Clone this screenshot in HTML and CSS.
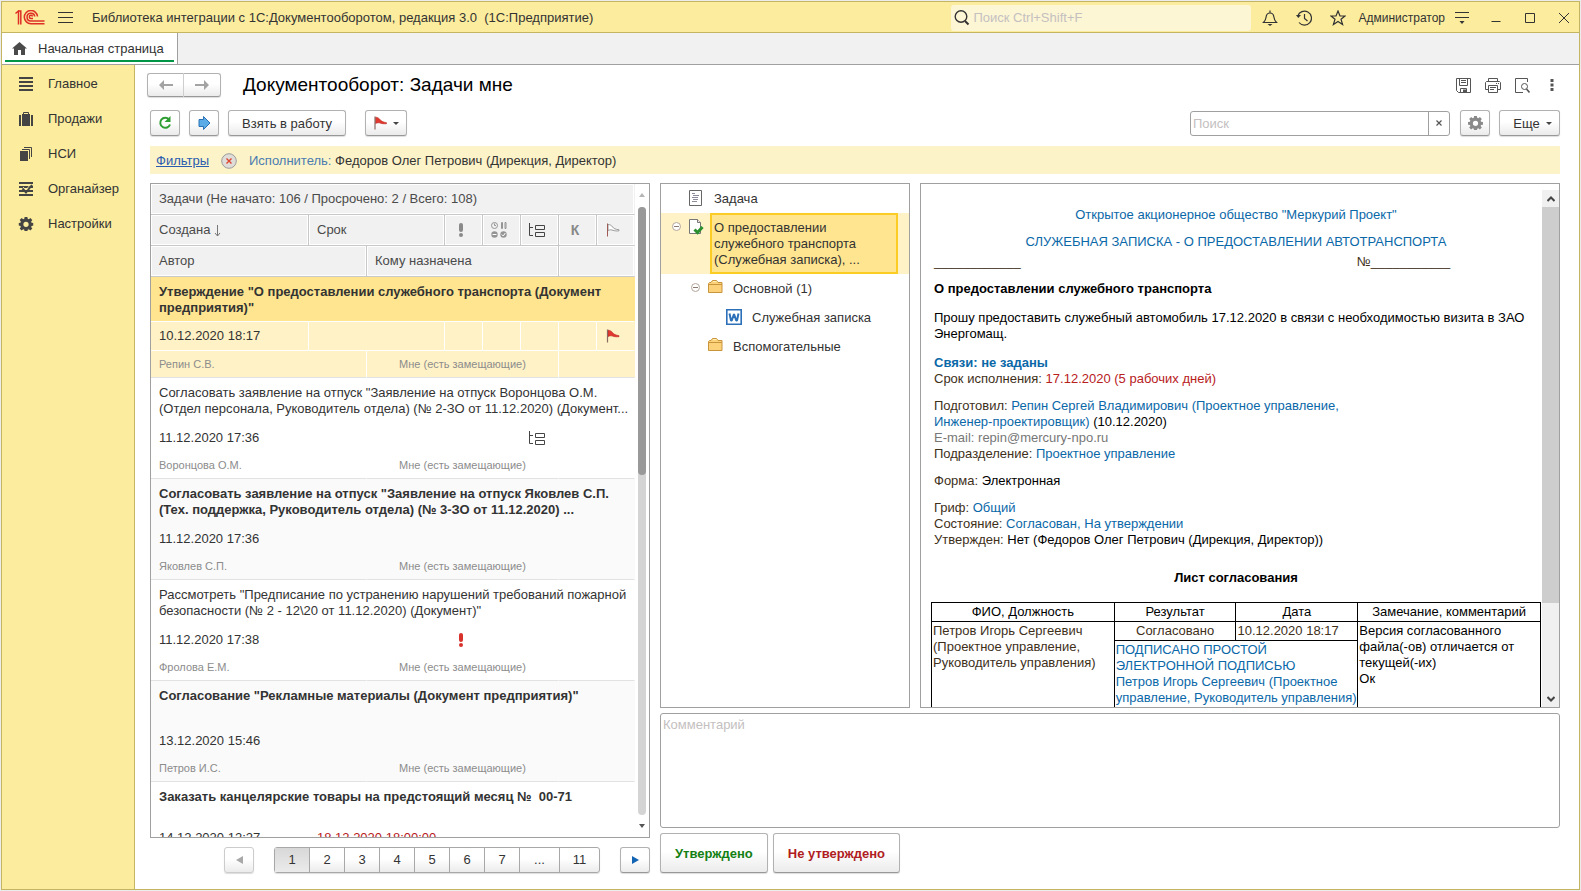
FILE: index.html
```html
<!DOCTYPE html>
<html lang="ru">
<head>
<meta charset="utf-8">
<meta name="viewport" content="width=device-width, initial-scale=1">
<title>Документооборот: Задачи мне</title>
<link rel="stylesheet" href="styles.css">
</head>
<body>
<svg class="sprite" aria-hidden="true">
  <symbol id="gear" viewBox="0 0 16 16">
    <path fill="currentColor" fill-rule="evenodd" d="M6.500 1h3l.3 2 1.200.5 1.600-1.300 2.100 2.100L13.400 6l.5 1.200 2 .2v2.800l-2 .3-.5 1.200 1.300 1.600-2.100 2.100-1.600-1.300-1.200.5-.3 2h-3l-.3-2-1.200-.5-1.600 1.300-2.100-2.100 1.300-1.600-.5-1.200-2-.3V7.400l2-.2.500-1.200-1.300-1.700 2.100-2.100L5 3.500 6.200 3zM8 6a2.800 2.800 0 1 0 0 5.600A2.800 2.800 0 0 0 8 6z"/>
  </symbol>
  <symbol id="tree" viewBox="0 0 17 16">
    <path fill="none" stroke="#444" d="M1.500 1v12.500H5M1.500 5.500H5M7.500 3.500h9v4h-9zM7.500 10.500h9v4h-9z"/>
  </symbol>
  <symbol id="flag-red" viewBox="0 0 14 14">
    <path fill="#e2382f" stroke="#b8241d" stroke-width=".6" d="M2 1.200c2 0 3.500 1 4.500 2.300 1.200 2 3.500 2.600 6.500 3.200v1c-2 .3-4.500 0-6-.5S4 6.500 2 7.500z"/>
    <path stroke="#8a6a64" stroke-width="1.200" d="M1.500.5v13"/>
  </symbol>
  <symbol id="folder" viewBox="0 0 15 13">
    <path fill="#fbd27a" stroke="#c8943c" d="M.5 3.500l1-1h1.500l1.500-2h4l1.500 2h4v10H.5z"/>
    <path fill="none" stroke="#c8943c" d="M1 4.500h13"/>
    <path stroke="#fff0b8" d="M5 1.500h3.500"/>
  </symbol>
  <symbol id="minus" viewBox="0 0 9 9">
    <circle cx="4.500" cy="4.500" r="4" fill="#fff" stroke="#b5a69a"/><path stroke="#8c7a70" d="M2 4.500h5"/>
  </symbol>
  <symbol id="bang" viewBox="0 0 6 14">
    <rect x="1" y="0" width="4" height="9" rx="2" fill="currentColor"/><circle cx="3" cy="12" r="2" fill="currentColor"/>
  </symbol>
</svg>

<div class="window">
  <header class="titlebar">
    <svg class="logo" viewBox="0 0 30 15" aria-label="1С"><g fill="none" stroke="#df2f27" stroke-width="1.500"><path d="M.5 3.500L3.500 1v13.500M3 1h2.800v13.500"/><path d="M22.500 6.500A6.600 6.600 0 1 0 16 13.700h13.500"/><path d="M19.800 6.500A3.900 3.900 0 1 0 16 11h13.500"/><path d="M17.500 6.500a1.600 1.600 0 1 0-1.500 2h2"/></g></svg>
    <button class="bare" aria-label="Меню"><svg width="15" height="13" viewBox="0 0 15 13"><path stroke="#333" d="M0 1.500h15M0 6.500h15M0 11.500h15"/></svg></button>
    <span class="app-name">Библиотека интеграции с 1С:Документооборотом, редакция 3.0 &nbsp;(1С:Предприятие)</span>
    <label class="global-search">
      <svg width="16" height="17" viewBox="0 0 16 17" fill="none" stroke="#333"><circle cx="7" cy="7.500" r="5.800" stroke-width="1.400"/><path stroke-width="2" d="M11 12l3.500 3.500"/></svg>
      <input type="text" placeholder="Поиск Ctrl+Shift+F" aria-label="Глобальный поиск">
    </label>
    <nav class="title-tools">
      <button class="bare" aria-label="Уведомления"><svg width="16" height="16" viewBox="0 0 16 16"><path fill="none" stroke="#333" stroke-width="1.200" d="M8 .5V3M1.500 12.500c2-2 2.300-3 2.600-5.500C4.400 4.500 6 3 8 3s3.600 1.500 3.900 4c.3 2.500.6 3.500 2.600 5.500z"/><path fill="#333" d="M5.500 14h5L8 16z"/></svg></button>
      <button class="bare" aria-label="История"><svg width="16" height="16" viewBox="0 0 16 16"><path fill="none" stroke="#333" stroke-width="1.200" d="M1.800 6A7 7 0 1 1 3 12.500M8.500 4v4.500l3 2.500"/><path fill="#333" d="M0 5h5L2.300 8z"/></svg></button>
      <button class="bare" aria-label="Избранное"><svg width="16" height="16" viewBox="0 0 16 16"><path fill="none" stroke="#333" stroke-width="1.200" d="M8 1l2 5h5l-4 3.300 1.600 5.200L8 11.500l-4.600 3L5 9.300 1 6h5z"/></svg></button>
      <a class="user" href="#">Администратор</a>
      <button class="bare" aria-label="Сервис"><svg width="14" height="14" viewBox="0 0 14 14"><path stroke="#333" d="M0 1.500h14M0 6.500h14"/><path fill="#333" d="M4.500 10h5L7 13z"/></svg></button>
    </nav>
    <div class="win-buttons">
      <button class="bare" aria-label="Свернуть"><svg width="10" height="10" viewBox="0 0 10 10"><path stroke="#333" d="M.5 8.500h9"/></svg></button>
      <button class="bare" aria-label="Развернуть"><svg width="10" height="10" viewBox="0 0 10 10"><path fill="none" stroke="#333" d="M.5.500h9v9h-9z"/></svg></button>
      <button class="bare" aria-label="Закрыть"><svg width="10" height="10" viewBox="0 0 10 10"><path stroke="#333" d="M0 0l10 10M10 0L0 10"/></svg></button>
    </div>
  </header>

  <div class="tabs">
    <a class="tab" href="#"><svg width="15" height="13" viewBox="0 0 15 13"><path fill="#4a4a4a" d="M7.500 0L15 6.500h-2V13H9V8H6v5H2V6.500H0z"/></svg><span>Начальная страница</span></a>
  </div>

  <div class="body">
    <nav class="sidebar">
      <a href="#"><svg width="14" height="15" viewBox="0 0 14 15"><path stroke="#444" stroke-width="2" d="M0 2h14M0 6h14M0 10h14M0 14h14"/></svg>Главное</a>
      <a href="#"><svg width="14" height="14" viewBox="0 0 14 14"><path fill="#444" d="M3 2h8v12H3zM0 3h2v11H0zM12 3h2v11h-2z"/><path fill="none" stroke="#444" d="M4.500 2V.5h5V2"/></svg>Продажи</a>
      <a href="#"><svg width="14" height="14" viewBox="0 0 14 14"><path fill="#444" d="M1 4h8v10H1z"/><path fill="none" stroke="#444" d="M3 2.500h7.500V12M5 .5h7.500V10"/></svg>НСИ</a>
      <a href="#"><svg width="14" height="14" viewBox="0 0 14 14"><path stroke="#444" stroke-width="2" d="M0 1h14M0 5h14M0 9h14M0 13h14"/><path fill="none" stroke="#fbec9e" d="M4 5l3 3 4.500-5.500"/><path fill="none" stroke="#444" stroke-width="2" d="M3.500 6.500l3.500 4 6-7.500"/></svg>Органайзер</a>
      <a href="#"><svg class="dark" width="16" height="16" viewBox="0 0 16 17"><use href="#gear" width="16" height="16"/></svg>Настройки</a>
    </nav>

    <main class="main">
      <div class="heading">
        <div class="history">
          <button class="btn" aria-label="Назад"><svg width="14" height="10" viewBox="0 0 14 10"><path fill="#a3a3a3" d="M0 5l5-5v4h9v2H5v4z"/></svg></button><button class="btn" aria-label="Вперед"><svg width="14" height="10" viewBox="0 0 14 10"><path fill="#a3a3a3" d="M14 5L9 0v4H0v2h9v4z"/></svg></button>
        </div>
        <h1>Документооборот: Задачи мне</h1>
        <div class="doc-tools">
          <button class="bare" aria-label="Сохранить"><svg width="15" height="15" viewBox="0 0 15 15"><path fill="none" stroke="#555" d="M.5.500h14v14h-12l-2-2zM3.500.5v7h8v-7M5 2.500h5M5 4.500h5M4.500 14.500v-4h6v4"/><path fill="#555" d="M7 11.500h3v3H7z"/></svg></button>
          <button class="bare" aria-label="Печать"><svg width="16" height="15" viewBox="0 0 16 15"><path fill="none" stroke="#555" d="M3.500 4V.5h9V4M3 11.500H.5v-7l1-1h13l1 1v7H13M3.500 7.500h9v7h-9zM5 9.500h6M5 11.500h4M11 5.500h1M13 5.500h1"/></svg></button>
          <button class="bare" aria-label="Просмотр"><svg width="15" height="15" viewBox="0 0 15 15"><path fill="none" stroke="#555" d="M12.500 4V.5H.5v14H8"/><circle cx="9.500" cy="8.500" r="3" fill="none" stroke="#555"/><path stroke="#555" stroke-width="1.600" d="M11.500 11l3 3.500"/></svg></button>
          <button class="bare" aria-label="Ещё действия"><svg width="4" height="12" viewBox="0 0 4 12"><path fill="#555" d="M.5 0h3v3h-3zM.5 4.500h3v3h-3zM.5 9h3v3h-3z"/></svg></button>
        </div>
      </div>

      <div class="toolbar">
        <button class="btn icon" aria-label="Обновить"><svg width="14" height="14" viewBox="0 0 14 14"><path fill="none" stroke="#2f9e33" stroke-width="2" d="M11 3.500a5 5 0 1 0 1 5"/><path fill="#2f9e33" d="M12.500 0v6h-6z"/></svg></button>
        <button class="btn icon" aria-label="Перейти"><svg width="13" height="14" viewBox="0 0 13 14"><path fill="#5aabe6" stroke="#2b72b4" d="M1 3.500h4.500v-3L12 7l-6.500 6.500v-3H1z"/></svg></button>
        <button class="btn take">Взять в работу</button>
        <button class="btn flag" aria-label="Флаг"><svg width="15" height="14"><use href="#flag-red"/></svg><span class="caret"></span></button>
        <span class="spacer"></span>
        <div class="search">
          <input type="text" placeholder="Поиск" aria-label="Поиск">
          <button aria-label="Очистить"><svg width="6" height="6" viewBox="0 0 6 6"><path stroke="#555" stroke-width="1.200" d="M.5.5l5 5M5.500.5l-5 5"/></svg></button>
        </div>
        <button class="btn icon" aria-label="Настройка"><svg class="gray" width="17" height="17" viewBox="0 0 16 18"><use href="#gear" width="16" height="16"/></svg></button>
        <button class="btn more">Еще <span class="caret"></span></button>
      </div>

      <div class="filters">
        <a href="#">Фильтры</a>
        <button class="bare" aria-label="Сбросить"><svg width="16" height="16" viewBox="0 0 16 16"><circle cx="8" cy="8" r="7.300" fill="#e0dcd8" stroke="#9c9c9c"/><path stroke="#e0452f" stroke-width="1.400" d="M5.500 5.500l5 5M10.500 5.500l-5 5"/></svg></button>
        <span><span class="filter-name">Исполнитель:</span> Федоров Олег Петрович (Дирекция, Директор)</span>
      </div>

      <div class="workspace">
        <section class="left">
          <div class="list panel">
            <div class="list-view">
              <table class="tasks">
                <colgroup><col class="c-created"><col class="c-author"><col class="c-term"><col class="c-ico"><col class="c-ico"><col class="c-ico"><col class="c-ico"><col class="c-ico"></colgroup>
                <thead>
                  <tr><th colspan="8">Задачи (Не начато: 106 / Просрочено: 2 / Всего: 108)</th></tr>
                  <tr>
                    <th>Создана <svg width="7" height="12" viewBox="0 0 7 12"><path fill="none" stroke="#777" d="M3.500 0v11M1 8l2.500 3L6 8"/></svg></th>
                    <th colspan="2">Срок</th>
                    <th class="ico"><svg class="gray" width="6" height="14" aria-label="Важность"><use href="#bang"/></svg></th>
                    <th class="ico"><svg width="16" height="16" viewBox="0 0 16 16" aria-label="Состояние"><g fill="none" stroke="#949494"><circle cx="3.500" cy="3.500" r="3"/><path d="M3.500 1.500v2H5M10.500.5h1v6h-1zM14 .5h1v6h-1z"/></g><circle cx="3.500" cy="12.500" r="3.200" fill="#949494"/><circle cx="12.500" cy="12.500" r="3.200" fill="#949494"/><path fill="none" stroke="#fff" d="M1.500 12.500h4M10.800 12.500l1.500 1.500 2-3"/></svg></th>
                    <th class="ico"><svg width="17" height="16" aria-label="Подзадачи"><use href="#tree"/></svg></th>
                    <th class="ico letter">К</th>
                    <th class="ico"><svg width="14" height="14" viewBox="0 0 14 14" aria-label="Флаг"><path fill="#fff" stroke="#999" d="M2 1.500c2 0 3.500 1 4.500 2.300 1.200 2 3 2.400 6.500 3v1c-2 .4-4.500 0-6-.5S4 6.500 2 7.500z"/><path stroke="#a05a55" d="M1.500.5v13"/></svg></th>
                  </tr>
                  <tr><th colspan="2">Автор</th><th colspan="4">Кому назначена</th><th colspan="2"></th></tr>
                </thead>
                <tbody class="selected">
                  <tr class="name unread"><td colspan="8"><div>Утверждение "О предоставлении служебного транспорта (Документ<br>предприятия)"</div></td></tr>
                  <tr class="when"><td>10.12.2020 18:17</td><td colspan="2"></td><td></td><td></td><td></td><td></td><td class="ico"><svg width="14" height="14" aria-label="Флаг"><use href="#flag-red"/></svg></td></tr>
                  <tr class="who"><td colspan="2">Репин С.В.</td><td colspan="4">Мне (есть замещающие)</td><td colspan="2"></td></tr>
                </tbody>
                <tbody>
                  <tr class="name"><td colspan="8"><div>Согласовать заявление на отпуск "Заявление на отпуск Воронцова О.М.<br>(Отдел персонала, Руководитель отдела) (№ 2-ЗО от 11.12.2020) (Документ...</div></td></tr>
                  <tr class="when"><td>11.12.2020 17:36</td><td colspan="2"></td><td></td><td></td><td class="ico"><svg width="17" height="16" aria-label="Есть подзадачи"><use href="#tree"/></svg></td><td></td><td></td></tr>
                  <tr class="who"><td colspan="2">Воронцова О.М.</td><td colspan="4">Мне (есть замещающие)</td><td colspan="2"></td></tr>
                </tbody>
                <tbody class="even">
                  <tr class="name unread"><td colspan="8"><div>Согласовать заявление на отпуск "Заявление на отпуск Яковлев С.П.<br>(Тех. поддержка, Руководитель отдела) (№ 3-ЗО от 11.12.2020) ...</div></td></tr>
                  <tr class="when"><td>11.12.2020 17:36</td><td colspan="2"></td><td></td><td></td><td></td><td></td><td></td></tr>
                  <tr class="who"><td colspan="2">Яковлев С.П.</td><td colspan="4">Мне (есть замещающие)</td><td colspan="2"></td></tr>
                </tbody>
                <tbody>
                  <tr class="name"><td colspan="8"><div>Рассмотреть "Предписание по устранению нарушений требований пожарной<br>безопасности (№ 2 - 12\20 от 11.12.2020) (Документ)"</div></td></tr>
                  <tr class="when"><td>11.12.2020 17:38</td><td colspan="2"></td><td class="ico"><svg class="red" width="6" height="14" aria-label="Важная"><use href="#bang"/></svg></td><td></td><td></td><td></td><td></td></tr>
                  <tr class="who"><td colspan="2">Фролова Е.М.</td><td colspan="4">Мне (есть замещающие)</td><td colspan="2"></td></tr>
                </tbody>
                <tbody class="even">
                  <tr class="name unread"><td colspan="8"><div>Согласование "Рекламные материалы (Документ предприятия)"</div></td></tr>
                  <tr class="when"><td>13.12.2020 15:46</td><td colspan="2"></td><td></td><td></td><td></td><td></td><td></td></tr>
                  <tr class="who"><td colspan="2">Петров И.С.</td><td colspan="4">Мне (есть замещающие)</td><td colspan="2"></td></tr>
                </tbody>
                <tbody>
                  <tr class="name unread"><td colspan="8"><div>Заказать канцелярские товары на предстоящий месяц № &nbsp;00-71</div></td></tr>
                  <tr class="when last"><td>14.12.2020 12:27</td><td class="overdue" colspan="2">18.12.2020 18:00:00</td><td></td><td></td><td></td><td></td><td></td></tr>
                </tbody>
              </table>
            </div>
            <div class="scroll thin" aria-hidden="true">
              <svg width="6" height="4" viewBox="0 0 6 4"><path fill="#b5b5b5" d="M3 0l3 4H0z"/></svg>
              <div class="track"><div class="thumb"></div></div>
              <svg width="6" height="4" viewBox="0 0 6 4"><path fill="#555" d="M0 0h6L3 4z"/></svg>
            </div>
          </div>
          <nav class="pager">
            <button class="btn step off" aria-label="Предыдущая"><svg width="7" height="8" viewBox="0 0 7 8"><path fill="#a8a8a8" d="M7 0v8L0 4z"/></svg></button>
            <div class="pages">
              <button class="current">1</button><button>2</button><button>3</button><button>4</button><button>5</button><button>6</button><button>7</button><button class="wide">...</button><button class="wide">11</button>
            </div>
            <button class="btn step" aria-label="Следующая"><svg width="7" height="8" viewBox="0 0 7 8"><path fill="#1464b4" d="M0 0v8l7-4z"/></svg></button>
          </nav>
        </section>

        <section class="right">
          <div class="panels">
            <ul class="tree panel">
              <li><span class="toggle"></span><svg width="15" height="16" viewBox="0 0 15 16"><path fill="#fff" stroke="#666" d="M.5.5h12v15H.5z"/><path stroke="#8c8c9c" d="M3 3.500h3M4 5.500h6M3 7.500h6M4 9.500h5M3 11.500h5"/></svg><span class="node">Задача</span></li>
              <li class="active"><svg class="toggle" height="9"><use href="#minus"/></svg><svg width="15" height="16" viewBox="0 0 15 16"><path fill="#fff" stroke="#777" d="M.5.500h8l3 3v11H.5z"/><path fill="#eee" stroke="#777" d="M8.500.5v3h3"/><path fill="none" stroke="#2a8f2f" stroke-width="3" d="M5.500 10.500l3 3 5-5.500"/></svg><span class="node">О предоставлении служебного транспорта (Служебная записка), ...</span></li>
              <li class="l1"><svg class="toggle" height="9"><use href="#minus"/></svg><svg width="15" height="13"><use href="#folder"/></svg><span class="node">Основной (1)</span></li>
              <li class="l2"><span class="toggle"></span><svg width="16" height="16" viewBox="0 0 16 16"><path fill="#fff" stroke="#2b70b8" stroke-width="1.600" d="M.8.8h14.400v14.400H.8z"/><path fill="none" stroke="#2b70b8" stroke-width="2" stroke-linejoin="bevel" d="M3.500 4.500l1.500 7h.8L8 5l2.200 6.500h.8l1.500-7"/></svg><span class="node">Служебная записка</span></li>
              <li class="l1"><span class="toggle"></span><svg width="15" height="13"><use href="#folder"/></svg><span class="node">Вспомогательные</span></li>
            </ul>

            <div class="preview panel">
              <article class="doc">
                <p class="center link">Открытое акционерное общество "Меркурий Проект"</p>
                <p class="center link">СЛУЖЕБНАЯ ЗАПИСКА - О ПРЕДОСТАВЛЕНИИ АВТОТРАНСПОРТА</p>
                <p class="number"><span>____________</span><span>№___________</span></p>
                <p class="strong">О предоставлении служебного транспорта</p>
                <p class="text">Прошу предоставить служебный автомобиль 17.12.2020 в связи с необходимостью визита в ЗАО Энергомащ.</p>
                <p><b class="link">Связи: не заданы</b><br>Срок исполнения: <span class="overdue">17.12.2020 (5 рабочих дней)</span></p>
                <p>Подготовил: <span class="link">Репин Сергей Владимирович (Проектное управление,<br>Инженер-проектировщик)</span> <span class="value">(10.12.2020)</span><br><span class="muted">E-mail: repin@mercury-npo.ru</span><br>Подразделение: <span class="link">Проектное управление</span></p>
                <p>Форма: <span class="value">Электронная</span></p>
                <p>Гриф: <span class="link">Общий</span><br>Состояние: <span class="link">Согласован, На утверждении</span><br>Утвержден: <span class="value">Нет (Федоров Олег Петрович (Дирекция, Директор))</span></p>
                <h2>Лист согласования</h2>
                <table class="approval">
                  <tr><th>ФИО, Должность</th><th>Результат</th><th>Дата</th><th>Замечание, комментарий</th></tr>
                  <tr><td rowspan="2">Петров Игорь Сергеевич<br>(Проектное управление,<br>Руководитель управления)</td><td class="center">Согласовано</td><td>10.12.2020 18:17</td><td class="value" rowspan="2">Версия согласованного<br>файла(-ов) отличается от<br>текущей(-их)<br>Ок</td></tr>
                  <tr><td class="link sign" colspan="2">ПОДПИСАНО ПРОСТОЙ<br>ЭЛЕКТРОННОЙ ПОДПИСЬЮ<br>Петров Игорь Сергеевич (Проектное<br>управление, Руководитель управления)</td></tr>
                </table>
              </article>
              <div class="scroll classic" aria-hidden="true">
                <span class="cap"><svg width="8" height="6" viewBox="0 0 8 6"><path fill="none" stroke="#444" stroke-width="2" d="M.5 5L4 1.500 7.500 5"/></svg></span>
                <div class="track"><div class="thumb"></div></div>
                <span class="cap"><svg width="8" height="6" viewBox="0 0 8 6"><path fill="none" stroke="#444" stroke-width="2" d="M.5 1L4 4.500 7.500 1"/></svg></span>
              </div>
            </div>
          </div>
          <textarea class="comment" placeholder="Комментарий" aria-label="Комментарий"></textarea>
          <div class="decisions">
            <button class="btn yes">Утверждено</button>
            <button class="btn no">Не утверждено</button>
          </div>
        </section>
      </div>
    </main>
  </div>
</div>
</body>
</html>
```

FILE: styles.css
```css
:root {
  --yellow: #fbec9e;
  --gold: #c4b562;
  --pale: #fcf3c8;
  --line: #a0a0a0;
  --text: #333;
  --link: #0a68a8;
}

* { box-sizing: border-box; }

body {
  margin: 0;
  padding: 1px;
  background: #ececec;
  color: var(--text);
  font: 13px/16px "Liberation Sans", Arial, sans-serif;
}

button, input, textarea { font: inherit; color: inherit; }
button { padding: 0; }
a { color: inherit; text-decoration: none; }
p, h1, h2, ul { margin: 0; padding: 0; }
svg { display: block; flex: none; }
.sprite { display: none; }

.window {
  display: flex;
  flex-direction: column;
  height: calc(100vh - 2px);
  border: 1px solid var(--gold);
  background: #fff;
}

.bare {
  display: flex;
  align-items: center;
  justify-content: center;
  border: 0;
  background: none;
}

/* Title bar */
.titlebar {
  display: flex;
  align-items: center;
  height: 31px;
  flex: none;
  padding: 1px 10px 0 13px;
  border-bottom: 1px solid var(--gold);
  background: var(--yellow);
}
.logo { width: 30px; height: 15px; margin-right: 13px; }
.app-name { margin-left: 19px; flex: 1; white-space: nowrap; }
.global-search {
  display: flex;
  align-items: center;
  gap: 3px;
  width: 300px;
  height: 26px;
  padding-left: 3px;
  border-radius: 3px;
  background: #fdf6d5;
}
.global-search input { flex: 1; min-width: 0; border: 0; padding: 0; background: none; outline: 0; }
::placeholder { color: #c4c0c0; opacity: 1; }
.title-tools { display: flex; align-items: center; gap: 18px; margin-left: 11px; }
.user { font-size: 12px; margin: 0 -8px 0 -6px; }
.win-buttons { display: flex; gap: 24px; margin-left: 22px; }

/* Tabs */
.tabs {
  display: flex;
  height: 32px;
  flex: none;
  border-bottom: 1px solid var(--line);
  background: #f1f1f1;
}
.tab {
  position: relative;
  display: flex;
  align-items: center;
  gap: 11px;
  padding: 0 13px 0 10px;
  border-right: 1px solid var(--line);
  background: #fff;
}
.tab::after {
  content: "";
  position: absolute;
  left: 3px;
  right: 3px;
  bottom: 2px;
  height: 2px;
  background: #009646;
}

.body { display: flex; flex: 1; min-height: 0; }

/* Sections */
.sidebar {
  width: 133px;
  flex: none;
  padding-top: 1px;
  border-right: 1px solid var(--gold);
  background: var(--yellow);
}
.sidebar a {
  display: grid;
  grid-template-columns: 16px 1fr;
  gap: 14px;
  align-items: center;
  justify-items: start;
  height: 35px;
  padding-left: 16px;
}
.sidebar svg { justify-self: center; }
.dark { color: #444; }
.gray { color: #8a8a8a; }
.red { color: #d8322c; }

.main {
  display: flex;
  flex-direction: column;
  flex: 1;
  min-width: 0;
  padding: 8px 19px 16px 15px;
}

/* Buttons */
.btn {
  display: flex;
  align-items: center;
  justify-content: center;
  height: 26px;
  border: 1px solid #b2b2b2;
  border-bottom-color: #989898;
  border-radius: 3px;
  background: linear-gradient(#fff 45%, #ebebeb);
  box-shadow: 0 1px 1px #ddd;
}
.btn.icon { width: 30px; }
.caret { border: 3px solid transparent; border-top-color: #444; border-bottom: 0; }

.heading { display: flex; align-items: center; height: 24px; }
.history { display: flex; margin-left: -3px; }
.history .btn { width: 37px; height: 24px; }
.history .btn:first-child { border-radius: 3px 0 0 3px; border-right-color: #ccc; }
.history .btn:last-child { border-radius: 0 3px 3px 0; border-left: 0; }
h1 { margin-left: 22px; flex: 1; font-size: 19px; font-weight: 400; line-height: 24px; color: #000; }
.doc-tools { display: flex; gap: 14px; margin-right: 6px; }
.doc-tools .bare:last-child { margin-left: 6px; }

.toolbar { display: flex; align-items: center; height: 26px; margin-top: 13px; }
.toolbar .btn + .btn { margin-left: 9px; }
.toolbar .take { padding: 1px 13px 0; }
.toolbar .flag { width: 42px; gap: 5px; }
.toolbar .btn + .flag { margin-left: 19px; }
.toolbar .more { width: 61px; gap: 6px; padding: 1px 0 0 6px; }
.spacer { flex: 1; }
.search {
  display: flex;
  width: 260px;
  height: 25px;
  margin-right: 10px;
  border: 1px solid var(--line);
  border-radius: 3px;
}
.search input { flex: 1; min-width: 0; border: 0; padding: 1px 2px 0; background: none; outline: 0; }
.search button {
  display: flex;
  align-items: center;
  justify-content: center;
  width: 21px;
  border: 0;
  border-left: 1px solid var(--line);
  background: none;
}

.filters {
  display: flex;
  align-items: center;
  gap: 12px;
  height: 28px;
  margin-top: 10px;
  padding: 1px 6px 0;
  background: var(--pale);
}
.filters a { color: #2a5db0; text-decoration: underline; }
.filter-name { color: #4a7cb0; }

/* Work area */
.workspace {
  display: grid;
  grid-template-columns: 5fr 9fr;
  gap: 10px;
  flex: 1;
  min-height: 0;
  margin-top: 9px;
}
.left, .right { display: flex; flex-direction: column; min-width: 0; min-height: 0; }
.panel { border: 1px solid var(--line); background: #fff; overflow: hidden; }

.list { display: flex; flex: 1; min-height: 0; }
.list-view { flex: 1; min-width: 0; overflow: hidden; }
.tasks { width: 100%; table-layout: fixed; border-collapse: separate; border-spacing: 0; }
.c-created { width: 158px; }
.c-author { width: 58px; }
.c-ico { width: 38px; }
.tasks th {
  height: 31px;
  padding: 0 8px;
  border-right: 1px solid #c8c8c8;
  border-bottom: 1px solid #c8c8c8;
  box-shadow: inset 0 0 0 1px #fff;
  background: #f1f1f1;
  color: #4a4a4a;
  font-weight: 400;
  text-align: left;
}
.tasks th svg { display: inline-block; vertical-align: middle; }
.tasks tr > :last-child { border-right-color: transparent; }
.tasks .ico { padding: 0 5px 0 0; text-align: center; }
.tasks .ico svg { display: block; margin: 0 auto; }
.tasks .letter { color: #888; font-weight: 700; font-size: 14px; }
.tasks td { padding: 0 8px; border-right: 1px solid transparent; }
.tasks .name td { height: 45px; padding: 7px 0 0 8px; vertical-align: top; }
.tasks .name div { height: 32px; white-space: nowrap; }
.tasks .when td { height: 29px; white-space: nowrap; }
.tasks .last td { padding-top: 3px; vertical-align: top; }
.tasks .who td { height: 27px; border-bottom: 1px solid #e2e2e2; color: #8c8c8c; font-size: 11px; }
.tasks .who td:nth-child(2) { text-align: center; }
.unread { font-weight: 700; }
.even { background: #fafafa; }
.selected td { border-right-color: #fff; border-bottom: 1px solid #fff; background: #fff2c6; }
.selected .name td { background: #ffe58f; }
.overdue { color: #b8201c; }

.scroll { display: flex; flex-direction: column; align-items: center; flex: none; }
.scroll .track { flex: 1; }
.thin { width: 14px; padding: 9px 3px 9px 3px; }
.thin .track { width: 8px; margin: 10px 0 9px; border-radius: 4px; background: #d4d4d4; }
.thin .thumb { height: 44%; border-radius: 4px; background: #999; }
.classic { width: 17px; padding-top: 6px; }
.classic .cap { display: flex; align-items: center; justify-content: center; width: 100%; height: 17px; background: #f0f0f0; }
.classic .track { width: 100%; background: #f0f0f0; }
.classic .thumb { height: 82%; background: #cdcdcd; }

.pager { display: flex; height: 26px; margin-top: 9px; flex: none; justify-content: flex-end; gap: 20px; }
.pager .step { width: 30px; }
.pager .off { border-color: #ccc; }
.pages {
  display: flex;
  border: 1px solid #a8a8a8;
  border-radius: 3px;
  background: linear-gradient(#fff 45%, #ebebeb);
  box-shadow: 0 1px 1px #ddd;
}
.pages button { width: 35px; border: 0; border-left: 1px solid #a8a8a8; background: none; }
.pages button:first-child { width: 34px; border-left: 0; }
.pages .wide { width: 40px; }
.pages .current { background: linear-gradient(#d8d8d8, #ebebeb); }

.panels {
  display: grid;
  grid-template-columns: 25fr 64fr;
  gap: 10px;
  flex: 1;
  min-height: 0;
}

/* Document tree */
.tree { list-style: none; }
.tree li {
  display: flex;
  align-items: flex-start;
  min-height: 29px;
  padding-left: 11px;
}
.tree li > svg { margin-top: 6px; }
.tree .toggle { width: 9px; margin: 9px 8px 0 0; flex: none; }
.tree .l1 { padding-left: 30px; }
.tree .l2 { padding-left: 49px; }
.tree .l2 .toggle { margin-right: 7px; }
.tree .node { margin-left: 10px; padding-top: 7px; }
.tree .active { background: #fff2c6; }
.tree .active .node {
  flex: 1;
  margin: 0 11px 0 6px;
  padding: 5px 20px 4px 2px;
  border: 2px solid #fbcc24;
  background: #ffe58f;
}

/* Document preview */
.preview { display: flex; }
.doc {
  flex: 1;
  min-width: 0;
  padding: 23px 1px 0 10px;
  color: #40301a;
}
.doc p { padding: 0 3px; margin-bottom: 11px; }
.doc .center { text-align: center; }
.doc .center + .number { margin-top: -7px; }
.doc .link { color: var(--link); }
.doc .value, .doc .strong, .doc .text, .doc h2 { color: #000; }
.doc .muted { color: #777; }
.strong { font-weight: 700; }
.doc .text { margin: 13px 0 13px; }
.number { display: grid; grid-template-columns: 7fr 3fr; }
.doc h2 { margin: 22px 0 16px; font-size: 13px; line-height: 16px; text-align: center; }
.approval { width: 100%; height: 140px; table-layout: fixed; border-collapse: collapse; }
.approval th, .approval td { padding: 1px; border: 1px solid #000; vertical-align: top; }
.approval tr:not(:last-child) { height: 19px; }
.approval th { color: #000; font-weight: 400; width: 30%; }
.approval th:nth-child(2), .approval th:nth-child(3) { width: 20%; }
.sign { white-space: nowrap; }

.comment {
  display: block;
  width: 100%;
  height: 115px;
  flex: none;
  margin-top: 5px;
  padding: 3px 2px 2px;
  border: 1px solid var(--line);
  border-radius: 3px;
  outline: 0;
  resize: none;
}
.decisions { display: flex; gap: 5px; margin-top: 5px; }
.decisions .btn { height: 40px; padding: 1px 14px 0; font-weight: 700; }
.yes { color: #138013; }
.no { color: #b01c22; }
```
